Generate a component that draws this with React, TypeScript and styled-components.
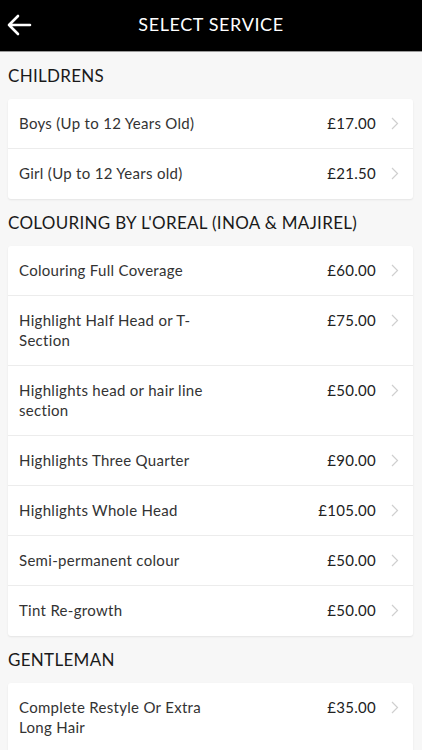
import styled, { createGlobalStyle } from 'styled-components'

const GlobalStyle = createGlobalStyle`
  html, body {
    margin: 0;
    padding: 0;
    background: #f7f7f7;
  }
  body {
    font-family: Lato, 'Liberation Sans', sans-serif;
    color: #333;
  }
`

const Page = styled.div`
  width: 422px;
  min-height: 750px;
  background: #f7f7f7;
`

const TopBar = styled.header`
  height: 51px;
  background: #000;
  border-bottom: 1px solid #9a9a9a;
  display: flex;
  align-items: center;
  justify-content: center;
  position: relative;
`

const BackButton = styled.button`
  position: absolute;
  left: 4px;
  top: 11px;
  width: 30px;
  height: 28px;
  padding: 0;
  border: 0;
  background: none;
  display: flex;
  align-items: center;
  justify-content: center;
`

const Title = styled.h1`
  margin: 0 0 4px;
  color: #fff;
  font-size: 18px;
  font-weight: 400;
  letter-spacing: 0.6px;
`

const Content = styled.main`
  padding: 0 9px 0 8px;
`

const SectionTitle = styled.h2`
  margin: 0;
  padding: 12px 0 11px;
  font-size: 17px;
  font-weight: 400;
  color: #1a1a1a;
  line-height: 24px;
  letter-spacing: 0.3px;
`

const Card = styled.ul`
  list-style: none;
  margin: 0;
  padding: 0;
  background: #fff;
  border-radius: 3px;
  box-shadow: 0 1px 2px rgba(0, 0, 0, 0.08);
`

const Row = styled.li`
  display: flex;
  align-items: flex-start;
  padding: 14px 0 15px 11px;
  border-bottom: 1px solid #ececec;
  font-size: 15px;
  line-height: 20px;
  letter-spacing: 0.3px;

  &:last-child {
    border-bottom: 0;
    padding-bottom: 16px;
  }
`

const Name = styled.span`
  flex: 0 0 200px;
  color: #333;
`

const Price = styled.span`
  flex: 1;
  text-align: right;
  color: #222;
`

const Chevron = styled.span`
  flex: 0 0 37px;
  display: flex;
  justify-content: center;
  padding-top: 4px;
`

const sections = [
  {
    title: 'CHILDRENS',
    items: [
      ['Boys (Up to 12 Years Old)', '£17.00'],
      ['Girl (Up to 12 Years old)', '£21.50'],
    ],
  },
  {
    title: "COLOURING BY L'OREAL (INOA & MAJIREL)",
    items: [
      ['Colouring Full Coverage', '£60.00'],
      ['Highlight Half Head or T-Section', '£75.00'],
      ['Highlights head or hair line section', '£50.00'],
      ['Highlights Three Quarter', '£90.00'],
      ['Highlights Whole Head', '£105.00'],
      ['Semi-permanent colour', '£50.00'],
      ['Tint Re-growth', '£50.00'],
    ],
  },
  {
    title: 'GENTLEMAN',
    items: [['Complete Restyle Or Extra Long Hair', '£35.00']],
  },
]

function App() {
  return (
    <Page>
      <GlobalStyle />
      <TopBar>
        <BackButton aria-label="Back">
          <svg width="26" height="24" viewBox="0 0 26 24" fill="none">
            <path
              d="M24 12H3M12 3L3 12l9 9"
              stroke="#fff"
              strokeWidth="2.6"
              strokeLinecap="round"
              strokeLinejoin="round"
            />
          </svg>
        </BackButton>
        <Title>SELECT SERVICE</Title>
      </TopBar>
      <Content>
        {sections.map((section) => (
          <section key={section.title}>
            <SectionTitle>{section.title}</SectionTitle>
            <Card>
              {section.items.map(([name, price]) => (
                <Row key={name}>
                  <Name>{name}</Name>
                  <Price>{price}</Price>
                  <Chevron>
                    <svg width="8" height="13" viewBox="0 0 8 13" fill="none">
                      <path d="M1 1l5.5 5.5L1 12" stroke="#cfcfcf" strokeWidth="1.2" />
                    </svg>
                  </Chevron>
                </Row>
              ))}
            </Card>
          </section>
        ))}
      </Content>
    </Page>
  )
}

export default App
